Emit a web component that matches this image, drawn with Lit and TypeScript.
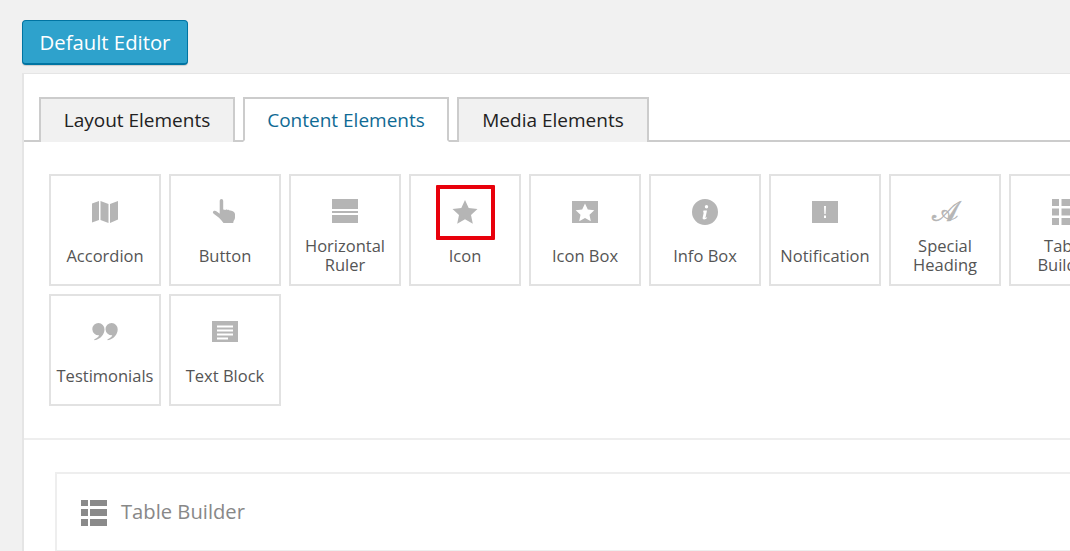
import { LitElement, html, css, svg } from "lit";
import { customElement } from "lit/decorators.js";

const icons: Record<string, unknown> = {
  map: svg`<path d="M0 3.500 7 1v19l-7 2.500zM8.500 1l8 3v19l-8-3zM18 4l8-3v18.500l-8 3.500z" transform="translate(0 1)"/>`,
  hand: svg`<path d="M9.500 0c1 0 1.700.8 1.700 2v8.500l2.300.4c.5-.5 1.300-.5 1.800 0 .6-.3 1.300-.2 1.800.3l2.400.6c1.800.4 3.500 1.500 3.500 3.500v3.200c0 1.500-.8 2.500-1.400 3.500l-.4 2H11.500c-1.500-1.800-2.800-3.700-4.500-5.300L1.700 14.800C.6 14 .7 12.900 1.400 12.300c.9-.7 2.400-.5 3.300.2l3 2.200V2c0-1.200.8-2 1.800-2z"/>`,
  ruler: svg`<path d="M0 0h26v10H0zM0 12h26v2H0zM0 16h26v8H0z"/>`,
  star: svg`<path d="M13 1l3.700 8 8.800 1-6.500 6 1.800 8.700L13 20.300 5.200 24.700 7 16 .5 10l8.800-1z"/>`,
  iconbox: svg`<path fill-rule="evenodd" d="M0 2h26v22H0zM13 4.500l-2.800 6-6.500.8 4.800 4.400-1.300 6.500 5.800-3.300 5.800 3.300-1.300-6.500 4.800-4.400-6.500-.8z"/>`,
  info: svg`<path fill-rule="evenodd" d="M13 0a13 13 0 1 0 0 26 13 13 0 0 0 0-26zM14.500 6a1.700 1.700 0 1 1 0 3.400 1.700 1.700 0 0 1 0-3.400zM11.500 11.500h3.500L13.500 18.500c-.1.500.2.600.6.300l.7-.6.400.6C14.300 19.800 13.300 20.500 12.200 20.500c-1.300 0-1.800-.7-1.500-1.900l1.100-5.300-.8.100z"/>`,
  notice: svg`<path fill-rule="evenodd" d="M0 2h26v22H0zM12 7l.4 8h1.200l.4-8zM12 16.500V19h2v-2.500z"/>`,
  table: svg`<path d="M0 0h7v6H0zM9 0h17v6H9zM0 9h7v7H0zM9 9h17v7H9zM0 19h7v7H0zM9 19h17v7H9z"/>`,
  grid: svg`<path d="M0 0h7v7H0zM9.500 0H26v7H9.500zM0 9.500h7v7H0zM9.500 9.500H26v7H9.500zM0 19h7v7H0zM9.500 19H26v7H9.500z"/>`,
  quote: svg`<path d="M6.500 3a6.200 6.200 0 0 1 6 6.300c0 5.500-4 9.700-10 11l-.4-.9c2.600-1 4.500-2.500 5-4.200A6.200 6.200 0 0 1 .3 9.300 6.200 6.200 0 0 1 6.500 3zM19.700 3a6.200 6.200 0 0 1 6 6.300c0 5.500-4 9.700-10 11l-.4-.9c2.600-1 4.500-2.500 5-4.200a6.200 6.200 0 0 1-6.800-5.900A6.200 6.200 0 0 1 19.700 3z" transform="translate(0 1)"/>`,
  text: svg`<path fill-rule="evenodd" d="M0 2h26v21H0zM5 6.500v2h16v-2zM5 10.500v2h16v-2zM5 14.500v2h16v-2zM5 18.500v2h11v-2z"/>`,
};

const tiles = [
  ["Accordion", "map"],
  ["Button", "hand"],
  ["Horizontal Ruler", "ruler"],
  ["Icon", "star"],
  ["Icon Box", "iconbox"],
  ["Info Box", "info"],
  ["Notification", "notice"],
  ["Special Heading", "script"],
  ["Table Builder", "grid"],
  ["Testimonials", "quote"],
  ["Text Block", "text"],
];

@customElement("app-root")
export class AppRoot extends LitElement {
  static styles = css`
    :host {
      display: block;
      width: 1070px;
      height: 551px;
      overflow: hidden;
      background: #f1f1f1;
      font-family: "Open Sans", sans-serif;
    }
    .page { width: 1300px; padding: 20px 0 0 22px; box-sizing: border-box; }
    .primary {
      display: block;
      width: 166px;
      height: 45px;
      box-sizing: border-box;
      background: #2ea2cc;
      border: 1px solid #0074a2;
      border-bottom-width: 2px;
      border-radius: 4px;
      color: #fff;
      font: 20.3px/42px "Open Sans", sans-serif;
      text-align: center;
      padding: 0;
      box-shadow: 0 1px 1px rgba(0,0,0,.15);
    }
    .panel {
      margin-top: 8px;
      background: #fff;
      border: 1px solid #e5e5e5;
      border-width: 1px 0 0 2px;
      padding-top: 23px;
      height: 520px;
      box-sizing: border-box;
    }
    .tabs {
      display: flex;
      gap: 8px;
      padding-left: 15px;
      border-bottom: 2px solid #ccc;
      height: 45px;
      box-sizing: border-box;
    }
    .tab {
      height: 45px;
      box-sizing: border-box;
      border: 2px solid #ccc;
      border-bottom: 0;
      background: #f1f1f1;
      color: #222;
      font-size: 19px;
      line-height: 43px;
      text-align: center;
    }
    .tab.active { background: #fff; color: #0f6a94; border-bottom: 2px solid #fff; }
    .t1 { width: 196px; }
    .t2 { width: 206px; }
    .t3 { width: 192px; }
    .grid {
      display: grid;
      grid-template-columns: repeat(9, 112px);
      grid-auto-rows: 112px;
      gap: 8px;
      padding: 32px 0 32px 25px;
      border-bottom: 2px solid #eee;
    }
    .tile {
      position: relative;
      box-sizing: border-box;
      border: 2px solid #e2e2e2;
      display: flex;
      flex-direction: column;
      align-items: center;
      padding-top: 23px;
      color: #555;
      font-size: 16.5px;
      line-height: 19px;
      text-align: center;
    }
    .icon { width: 26px; height: 26px; fill: #b5b5b5; display: block; }
    .script {
      width: 26px;
      height: 26px;
      display: block;
      color: #b5b5b5;
      -webkit-text-stroke: 0.6px #b5b5b5;
      font: 28px/26px "DejaVu Serif", "DejaVu Sans", serif;
      text-align: center;
    }
    .label {
      height: 38px;
      width: 92px;
      margin-top: 11px;
      display: flex;
      align-items: center;
      justify-content: center;
    }
    .mark {
      position: absolute;
      left: 25px;
      top: 9px;
      width: 59px;
      height: 55px;
      box-sizing: border-box;
      border: 4px solid #e8000b;
      border-radius: 1px;
    }
    .builder {
      margin: 32px 0 0 31px;
      height: 80px;
      box-sizing: border-box;
      background: #fff;
      border: 2px solid #eee;
      display: flex;
      align-items: center;
      gap: 14px;
      padding-left: 24px;
      color: #888;
      font-size: 20.2px;
    }
    .builder .icon { fill: #8a8a8a; margin-top: 2px; }
    .builder span { margin-bottom: 2px; }
  `;

  private glyph(name: string) {
    if (name === "script") return html`<span class="script">𝒜</span>`;
    return html`<svg class="icon" viewBox="0 0 26 26">${icons[name]}</svg>`;
  }

  render() {
    return html`<div class="page">
      <button class="primary">Default Editor</button>
      <div class="panel">
        <div class="tabs">
          <div class="tab t1">Layout Elements</div>
          <div class="tab t2 active">Content Elements</div>
          <div class="tab t3">Media Elements</div>
        </div>
        <div class="grid">
          ${tiles.map(
            ([label, icon]) => html`<div class="tile">
              ${this.glyph(icon)}
              <div class="label">${label}</div>
              ${label === "Icon" ? html`<div class="mark"></div>` : null}
            </div>`
          )}
        </div>
        <div class="builder">
          <svg class="icon" viewBox="0 0 26 26">${icons.table}</svg>
          <span>Table Builder</span>
        </div>
      </div>
    </div>`;
  }
}
